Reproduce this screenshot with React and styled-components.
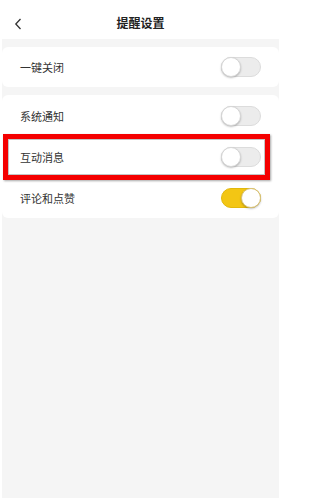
import styled, { createGlobalStyle } from "styled-components";

const GlobalStyle = createGlobalStyle`
  body {
    margin: 0;
    background: #fff;
    font-family: "Noto Sans CJK SC", "Noto Sans", sans-serif;
  }
`;

const sections = [
  [{ label: "一键关闭", on: false }],
  [
    { label: "系统通知", on: false },
    { label: "互动消息", on: false, marked: true },
    { label: "评论和点赞", on: true },
  ],
];

function Toggle({ on }) {
  return (
    <Track $on={on}>
      <Knob $on={on} />
    </Track>
  );
}

function App() {
  return (
    <>
      <GlobalStyle />
      <Screen>
        <Header>
          <Back>
            <svg width="8" height="12" viewBox="0 0 8 12">
              <path d="M6.5 1 L1.8 6 L6.5 11" fill="none" stroke="#333" strokeWidth="1.3" />
            </svg>
          </Back>
          <Title>提醒设置</Title>
        </Header>
        <Body>
          {sections.map((rows, i) => (
            <Card key={i}>
              {rows.map((row) => (
                <Row key={row.label}>
                  <Label>{row.label}</Label>
                  <Toggle on={row.on} />
                  {row.marked && <Mark />}
                </Row>
              ))}
            </Card>
          ))}
        </Body>
      </Screen>
    </>
  );
}

const Screen = styled.div`
  margin: 0 2px;
  width: 277px;
  height: 498px;
  background: #f5f5f5;
  display: flex;
  flex-direction: column;
`;

const Header = styled.div`
  height: 39px;
  background: #fff;
  display: flex;
  align-items: center;
  justify-content: center;
  position: relative;
`;

const Back = styled.div`
  position: absolute;
  left: 12px;
  top: 18px;
  display: flex;
`;

const Title = styled.div`
  font-size: 12px;
  font-weight: 700;
  color: #222;
  margin-top: 5px;
`;

const Body = styled.div`
  padding-top: 8px;
  display: flex;
  flex-direction: column;
  gap: 8px;
`;

const Card = styled.div`
  background: #fff;
  border-radius: 6px;
  display: flex;
  flex-direction: column;
`;

const Row = styled.div`
  position: relative;
  height: 41px;
  padding: 0 18px 0 18px;
  display: flex;
  align-items: center;
  justify-content: space-between;
  &:only-child {
    height: 40px;
  }
`;

const Label = styled.span`
  font-size: 11px;
  color: #333;
`;

const Track = styled.div`
  width: 40px;
  height: 20px;
  box-sizing: border-box;
  border-radius: 10px;
  border: 1px solid ${(p) => (p.$on ? "#e2b80c" : "#dcdcdc")};
  background: ${(p) => (p.$on ? "#f3c614" : "#ececec")};
  position: relative;
`;

const Knob = styled.div`
  position: absolute;
  top: -1px;
  left: ${(p) => (p.$on ? "19px" : "-1px")};
  width: 20px;
  height: 20px;
  box-sizing: border-box;
  border-radius: 50%;
  background: #fff;
  border: 1px solid ${(p) => (p.$on ? "#d8c27a" : "#d6d6d6")};
  box-shadow: 0 1px 2px rgba(0, 0, 0, 0.25);
`;

const Mark = styled.div`
  position: absolute;
  left: 1px;
  top: -2px;
  width: 267px;
  height: 46px;
  box-sizing: border-box;
  border: 5px solid #f40000;
  box-shadow: inset 0 0 0 1px #c4c4c4, 1px 1px 2px rgba(0, 0, 0, 0.35);
  pointer-events: none;
`;

export default App;
